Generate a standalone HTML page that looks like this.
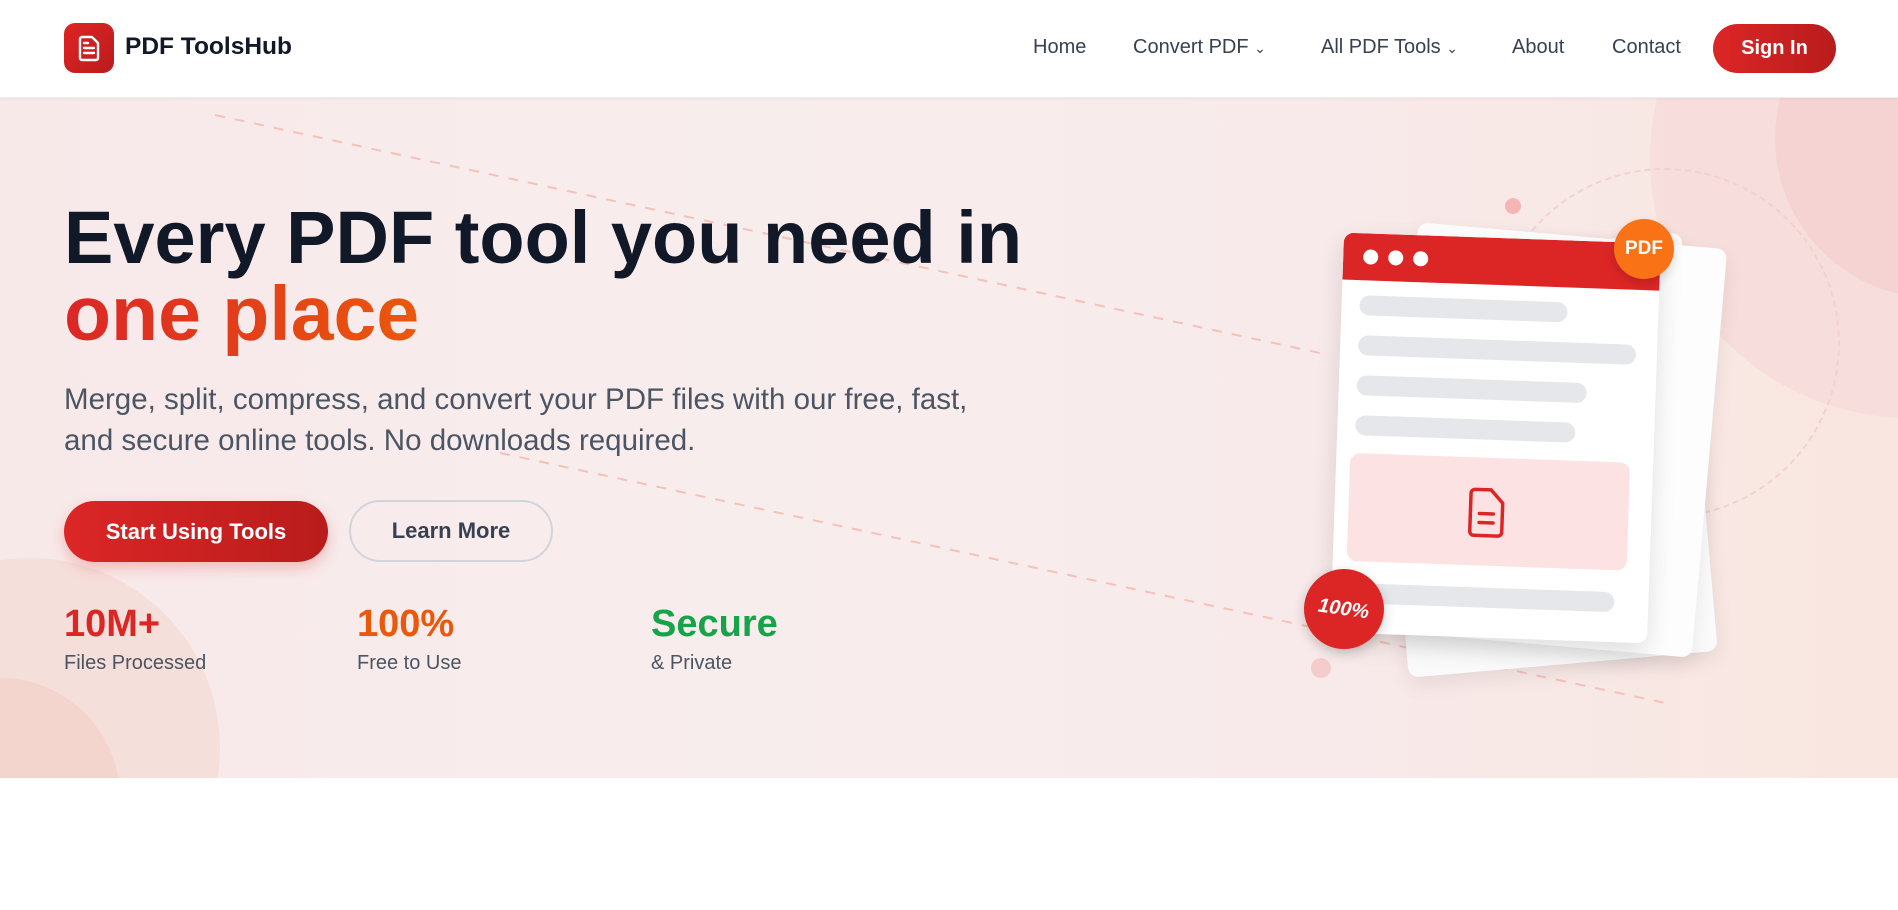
<!DOCTYPE html>
<html><head><meta charset="utf-8"><style>
*{margin:0;padding:0;box-sizing:border-box}
body{width:1898px;height:910px;overflow:hidden;background:#fff;font-family:"Liberation Sans",sans-serif;position:relative}
.hdr{position:absolute;top:0;left:0;width:1898px;height:98px;background:#fff;border-bottom:1px solid #eee;z-index:5;box-shadow:0 1px 3px rgba(0,0,0,.05)}
.logo{position:absolute;left:64px;top:23px;width:50px;height:50px;border-radius:11px;background:linear-gradient(135deg,#e02424,#b91c1c)}
.brand{position:absolute;left:125px;top:33px;font-size:24.5px;font-weight:700;color:#111827}
.nav{position:absolute;top:36px;font-size:20px;color:#374151}
.signin{position:absolute;left:1713px;top:24px;width:123px;height:49px;border-radius:25px;background:linear-gradient(90deg,#dc2626,#b91c1c);color:#fff;font-size:20px;font-weight:700;text-align:center;line-height:49px}
.hero{position:absolute;top:98px;left:0;width:1898px;height:680px;background:linear-gradient(90deg,#f8e9e9 0%,#f8eded 40%,#f8eaea 70%,#f9e6e0 100%);overflow:hidden}
h1{position:absolute;left:64px;top:200px;font-size:74px;line-height:76px;font-weight:700;color:#111827;z-index:2}
h1 span{background:linear-gradient(90deg,#dc2626,#ea580c);-webkit-background-clip:text;color:transparent;font-size:77px}
.p{position:absolute;left:64px;top:379px;font-size:29.5px;line-height:41px;color:#4b5563;width:940px;z-index:2}
.b1{position:absolute;left:64px;top:501px;width:264px;height:61px;border-radius:31px;background:linear-gradient(90deg,#dc2626,#b91c1c);color:#fff;font-weight:700;font-size:22px;text-align:center;line-height:61px;box-shadow:0 6px 14px rgba(220,38,38,.25);z-index:2}
.b2{position:absolute;left:349px;top:500px;width:204px;height:62px;border-radius:31px;border:2px solid #d1d5db;color:#374151;font-weight:700;font-size:22px;text-align:center;line-height:58px;z-index:2}
.sn{position:absolute;top:603px;font-size:38px;font-weight:700;z-index:2}
.sl{position:absolute;top:652px;font-size:20px;color:#4b5563;z-index:2}
.bar{position:absolute;height:20px;border-radius:10px;background:#e5e7eb}
</style></head><body>
<div class="hdr">
<div class="logo"><svg width="50" height="50" viewBox="0 0 50 50"><path d="M18 14h10l6 6v15a2 2 0 0 1-2 2H18a2 2 0 0 1-2-2V16a2 2 0 0 1 2-2z" fill="none" stroke="#fff" stroke-width="2.4" stroke-linejoin="round"/><path d="M20 25h10M20 30h10M20 20h4" stroke="#fff" stroke-width="2.4" stroke-linecap="round"/></svg></div>
<div class="brand">PDF ToolsHub</div>
<div class="nav" style="left:1033px">Home</div>
<div class="nav" style="left:1133px">Convert PDF <span style="font-size:14px">&#8964;</span></div>
<div class="nav" style="left:1321px">All PDF Tools <span style="font-size:14px">&#8964;</span></div>
<div class="nav" style="left:1512px">About</div>
<div class="nav" style="left:1612px">Contact</div>
<div class="signin">Sign In</div>
</div>
<div class="hero">
<div style="position:absolute;left:1650px;top:-200px;width:520px;height:520px;border-radius:50%;background:#f6dcdb;opacity:.8"></div>
<div style="position:absolute;left:1775px;top:-120px;width:320px;height:320px;border-radius:50%;background:#f3cfcf;opacity:.7"></div>
<div style="position:absolute;left:-160px;top:460px;width:380px;height:380px;border-radius:50%;background:#f4dcd6;opacity:.8"></div>
<div style="position:absolute;left:-120px;top:580px;width:240px;height:240px;border-radius:50%;background:#f1cfc6;opacity:.6"></div>
<div style="position:absolute;left:1490px;top:70px;width:350px;height:350px;border-radius:50%;border:2px dashed #f2d2d0"></div>
<svg style="position:absolute;left:0;top:0" width="1898" height="680"><path d="M215 17 L1320 255" stroke="#f3c2b8" stroke-width="2" stroke-dasharray="10 10"/><path d="M500 355 L1670 606" stroke="#f3c2b8" stroke-width="2" stroke-dasharray="10 10"/><circle cx="1513" cy="108" r="8" fill="#f5b5b5"/><circle cx="1321" cy="570" r="10" fill="#f5cccc"/></svg>
</div>
<h1>Every PDF tool you need in<br><span>one place</span></h1>
<div class="p">Merge, split, compress, and convert your PDF files with our free, fast, and secure online tools. No downloads required.</div>
<div class="b1">Start Using Tools</div>
<div class="b2">Learn More</div>
<div class="sn" style="left:64px;color:#dc2626">10M+</div><div class="sl" style="left:64px">Files Processed</div>
<div class="sn" style="left:357px;color:#ea580c">100%</div><div class="sl" style="left:357px">Free to Use</div>
<div class="sn" style="left:651px;color:#16a34a">Secure</div><div class="sl" style="left:651px">&amp; Private</div>

<div style="position:absolute;left:1390px;top:245px;width:310px;height:420px;background:#fafafa;border-radius:10px;transform:rotate(-5deg);box-shadow:0 8px 20px rgba(0,0,0,.08)"></div>
<div style="position:absolute;left:1400px;top:235px;width:310px;height:410px;background:#fdfdfd;border-radius:10px;transform:rotate(5deg);box-shadow:0 8px 20px rgba(0,0,0,.08)"></div>
<div style="position:absolute;left:1337px;top:238px;width:317px;height:400px;background:#fff;border-radius:10px;transform:rotate(2deg);box-shadow:0 10px 25px rgba(0,0,0,.12);overflow:hidden">
<div style="height:47px;background:#dc2626;position:relative"><span style="position:absolute;left:20px;top:16px;width:15px;height:15px;border-radius:50%;background:#fff"></span><span style="position:absolute;left:45px;top:16px;width:15px;height:15px;border-radius:50%;background:#fff"></span><span style="position:absolute;left:70px;top:16px;width:15px;height:15px;border-radius:50%;background:#fff"></span></div>
<div class="bar" style="left:18px;top:62px;width:208px"></div>
<div class="bar" style="left:18px;top:102px;width:278px"></div>
<div class="bar" style="left:18px;top:142px;width:230px"></div>
<div class="bar" style="left:18px;top:182px;width:220px"></div>
<div style="position:absolute;left:14px;top:220px;width:280px;height:108px;border-radius:10px;background:#fde2e3"><svg style="position:absolute;left:118px;top:30px" width="44" height="52" viewBox="0 0 44 52"><path d="M8 2h16l12 13v29a4 4 0 0 1-4 4H8a4 4 0 0 1-4-4V6a4 4 0 0 1 4-4z" fill="none" stroke="#dc2626" stroke-width="3.5" stroke-linejoin="round"/><path d="M13 26h14M13 35h14" stroke="#dc2626" stroke-width="3.5" stroke-linecap="round"/></svg></div>
<div class="bar" style="left:18px;top:350px;width:265px"></div>
</div>
<div style="position:absolute;left:1614px;top:219px;width:60px;height:60px;border-radius:50%;background:#f97316;color:#fff;font-weight:700;font-size:19px;text-align:center;line-height:60px;box-shadow:0 4px 10px rgba(0,0,0,.15)">PDF</div>
<div style="position:absolute;left:1304px;top:569px;width:80px;height:80px;border-radius:50%;background:#dc2626;color:#fff;font-weight:700;font-size:20px;font-style:italic;text-align:center;line-height:80px;box-shadow:0 4px 12px rgba(0,0,0,.2)"><span style="display:inline-block;transform:rotate(8deg)">100%</span></div>
</body></html>
